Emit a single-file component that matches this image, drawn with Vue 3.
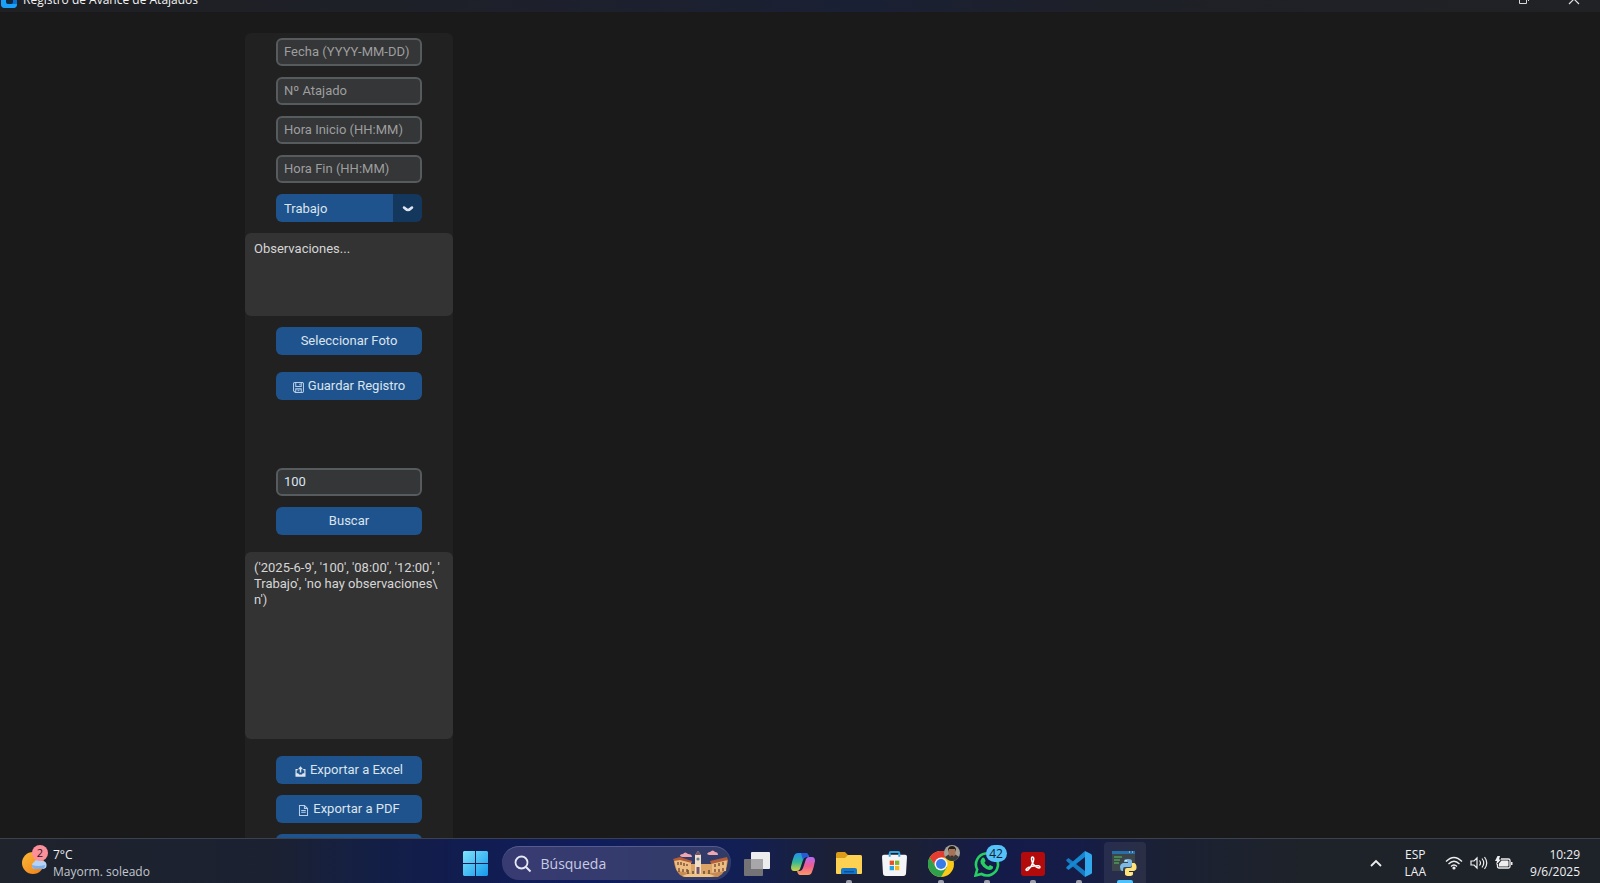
<script setup>
import { ref } from 'vue'

const fields = [
  { id: 'fecha', hint: 'Fecha (YYYY-MM-DD)' },
  { id: 'atajado', hint: 'Nº Atajado' },
  { id: 'inicio', hint: 'Hora Inicio (HH:MM)' },
  { id: 'fin', hint: 'Hora Fin (HH:MM)' }
]
const values = ref({ fecha: '', atajado: '', inicio: '', fin: '' })
const estado = ref('Trabajo')
const observaciones = ref('Observaciones...')
const busqueda = ref('100')
const resultado = ref("('2025-6-9', '100', '08:00', '12:00', '\nTrabajo', 'no hay observaciones\\\nn')")
</script>

<template>
  <div class="screen">
    <header class="titlebar">
      <svg class="app-icon" viewBox="0 0 16 16" width="16" height="16" aria-hidden="true">
        <rect width="16" height="16" rx="4" fill="#0a6fd0" />
        <path d="M0 0h6v16H4a4 4 0 0 1-4-4zM6 12h10a4 4 0 0 1-4 4H6z" fill="#18a0fb" />
        <rect x="5" y="4" width="7" height="8" rx="2" fill="#12263c" />
      </svg>
      <h1>Registro de Avance de Atajados</h1>
      <div class="window-buttons">
        <button type="button" aria-label="Restaurar">
          <svg viewBox="0 0 12 12" width="12" height="12"><path d="M1.500 3.500h7v7h-7zM4 1h6.500v7" fill="none" stroke="#d8d8d8" /></svg>
        </button>
        <button type="button" aria-label="Cerrar">
          <svg viewBox="0 0 12 12" width="12" height="12"><path d="M1 1l10 10M11 1L1 11" fill="none" stroke="#e0e0e0" stroke-width="1.200" /></svg>
        </button>
      </div>
    </header>

    <main class="workspace">
      <form class="panel" @submit.prevent>
        <input v-for="f in fields" :key="f.id" v-model="values[f.id]" class="control entry" type="text" :placeholder="f.hint" :aria-label="f.hint" />
        <div class="control option">
          <select v-model="estado" aria-label="Estado">
            <option>Trabajo</option>
            <option>Descanso</option>
          </select>
          <span class="arrow">
            <svg viewBox="0 0 12 8" width="12" height="8" aria-hidden="true"><path d="M2 2.500Q4.500 5 6 5T10 2.500" fill="none" stroke="#dce4ee" stroke-width="2.500" stroke-linecap="round" /></svg>
          </span>
        </div>
        <textarea v-model="observaciones" class="box notes" aria-label="Observaciones" spellcheck="false"></textarea>
        <button type="button" class="control action">Seleccionar Foto</button>
        <button type="submit" class="control action save">
          <svg viewBox="0 0 12 12" width="11" height="11" aria-hidden="true"><path d="M2 .6h8.500l.9.900V10a1.400 1.400 0 0 1-1.400 1.400H2.500L.6 9.600V2A1.400 1.400 0 0 1 2 .6zM3 .8v4h6v-4M3 11.200V7.500h6v3.700M5 9.500h2M7.500 2v1.500" fill="none" stroke="#b9cfe8" stroke-width="1.100" /></svg>
          <span>Guardar Registro</span>
        </button>
        <input v-model="busqueda" class="control entry search" type="text" aria-label="Buscar Nº Atajado" />
        <button type="button" class="control action">Buscar</button>
        <textarea v-model="resultado" class="box results" aria-label="Resultados" spellcheck="false"></textarea>
        <button type="button" class="control action export">
          <svg viewBox="0 0 12 12" width="11" height="11" aria-hidden="true"><path d="M3 4H1.200v7.200h9.600V4H9" fill="none" stroke="#dce4ee" stroke-width="1.300" /><path d="M1 8h2.500l1 1.300h3L8.500 8H11v3H1zM6 .3L8.700 3.500H6.800v3.500H5.200V3.500H3.300z" fill="#dce4ee" /></svg>
          <span>Exportar a Excel</span>
        </button>
        <button type="button" class="control action">
          <svg viewBox="0 0 12 12" width="11" height="11" aria-hidden="true"><path d="M1.600.6H7l3.400 3.300v7.500H1.600zM7 .6v3.300h3.400M3.500 6h5M3.500 8h5" fill="none" stroke="#b9cfe8" stroke-width="1.100" /></svg>
          <span>Exportar a PDF</span>
        </button>
        <button type="button" class="control action" aria-label="Exportar"></button>
      </form>
    </main>

    <footer class="taskbar">
      <button type="button" class="weather">
        <span class="weather-icon">
          <svg viewBox="0 0 28 30" width="28" height="30" aria-hidden="true">
            <defs><linearGradient id="sun" x1="0" y1="0" x2="1" y2="1"><stop stop-color="#fbb937" /><stop offset="1" stop-color="#ef7d1a" /></linearGradient></defs>
            <circle cx="11" cy="17" r="11" fill="url(#sun)" />
            <path d="M12 23a4 4 0 0 1 0-7 5 5 0 0 1 8-1 4 4 0 0 1 1 8z" fill="#b5d3f5" />
            <path d="M12 23a4 4 0 0 1-2-4q6 2 13 0a4 4 0 0 1-2 4z" fill="#7faee8" />
          </svg>
          <span class="alert">2</span>
        </span>
        <span class="weather-text"><span class="temp">7°C</span><span class="sky">Mayorm. soleado</span></span>
      </button>

      <nav class="apps" aria-label="Barra de tareas">
        <button type="button" class="app" aria-label="Inicio">
          <svg viewBox="0 0 26 26" width="25" height="25">
            <defs><linearGradient id="win" x1="0" y1="0" x2="1" y2="1"><stop stop-color="#7fe4fb" /><stop offset="1" stop-color="#1498ec" /></linearGradient></defs>
            <path d="M1 0h11.500v12.500H0V1zM13.500 0H25l1 1v11.500H13.500zM0 13.500h12.500V26H1l-1-1zM13.500 13.500H26V25l-1 1H13.500z" fill="url(#win)" />
          </svg>
        </button>
        <label class="finder">
          <svg viewBox="0 0 18 18" width="18" height="18" aria-hidden="true"><path d="M12 12l4.500 4.500" stroke="#e6e8f4" stroke-width="2" /><circle cx="7.500" cy="7.500" r="6" fill="none" stroke="#e6e8f4" stroke-width="1.800" /></svg>
          <input type="text" placeholder="Búsqueda" aria-label="Búsqueda" />
          <svg class="plaza" viewBox="0 0 56 28" width="56" height="28" aria-hidden="true">
            <path d="M1 10q0 9 6 15l4 2h34q9-5 10-17l-14 2v5H16v-4z" fill="#c98b55" />
            <path d="M1 10l6-1 11 3v11L4 21zM38 12l16-3-1 12-15 2z" fill="#ebbd80" />
            <path d="M0 9l7-2 12 4v2L7 10l-6 1zM37 11l17-4 1 3-17 4z" fill="#b45d38" />
            <path d="M18 14h21v9H18z" fill="#dca467" />
            <path d="M5 12v3M8 12v3M11 13v3M14 14v2M42 14v3M46 13v3M50 12v3M6 18v4M10 19v3M14 19v3M42 19v3M46 19v3M50 18v3" stroke="#744330" stroke-width="1.300" />
            <path d="M22 5l3-4 3 4v19h-6z" fill="#f0dfc4" />
            <path d="M22 5l3-4 3 4zM23.500 17h3v7h-3z" fill="#74526b" />
            <circle cx="25" cy="9" r="1.600" fill="#687c9f" />
            <path d="M9 26q8-4 16-2 9-2 17 2l-4 1H13z" fill="#f0c485" />
            <path d="M15 24v-4M20 24v-3M31 24v-3M36 24v-4" stroke="#6b5436" stroke-width="1.600" />
            <path d="M7 6q0-2 3-2 2-3 5 0 4 0 4 3H9zM34 4q1-2 3-2 3-3 5 0 3 0 3 3H36z" fill="#eda6b2" />
          </svg>
        </label>
        <button type="button" class="app" aria-label="Vista de tareas">
          <svg viewBox="0 0 26 24" width="26" height="24"><rect x="7" width="19" height="17" rx="1" fill="#ececef" /><rect y="7" width="19" height="17" rx="1" fill="#747477" /><path d="M7 7h12v10H7z" fill="#a7a7aa" /></svg>
        </button>
        <button type="button" class="app" aria-label="Copilot">
          <svg viewBox="0 0 24 22" width="24" height="22">
            <defs>
              <linearGradient id="cpa" x1="0" y1="0" x2="0" y2="1"><stop stop-color="#238fef" /><stop offset=".5" stop-color="#31b899" /><stop offset="1" stop-color="#d4d33f" /></linearGradient>
              <linearGradient id="cpb" x1="0" y1="0" x2="0" y2="1"><stop stop-color="#b46af5" /><stop offset=".5" stop-color="#ef5d8f" /><stop offset="1" stop-color="#fc9868" /></linearGradient>
            </defs>
            <path d="M7 0h8q2 0 3 4h-3q-2 0-3 3l-3 9q-1 2-3 2H3q-3 0-3-4Q1 8 3 3 4 0 7 0z" fill="url(#cpa)" />
            <path d="M17 22H9q-2 0-3-4h3q2 0 3-3l3-9q1-2 3-2h3q3 0 3 4-1 6-3 11-1 3-4 3z" fill="url(#cpb)" />
            <path d="M10 0h5q2 0 3 4h-3q-2 0-3 3z" fill="#235bd8" />
          </svg>
        </button>
        <button type="button" class="app open" aria-label="Explorador de archivos">
          <svg viewBox="0 0 26 24" width="26" height="24">
            <path d="M0 3V2q0-2 2-2h7l3 3h12q2 0 2 2v4H0z" fill="#dc9b18" />
            <path d="M0 6h9l3-3h12q2 0 2 2v16q0 1-1 1H1q-1 0-1-1z" fill="#fdd253" />
            <path d="M5 22v-4q0-2 2-2h12q2 0 2 2v4z" fill="#1678cc" /><path d="M8 19h10v1.500H8z" fill="#0c518e" />
          </svg>
        </button>
        <button type="button" class="app" aria-label="Microsoft Store">
          <svg viewBox="0 0 26 26" width="25" height="25">
            <path d="M8 6V2q0-1 1-1h8q1 0 1 1v4" fill="none" stroke="#31a5df" stroke-width="2" />
            <path d="M2 4h22q2 0 2 2l-1 17q0 3-3 3H4q-3 0-3-3L0 6q0-2 2-2z" fill="#f4f5f7" />
            <path d="M7 4h2v2H7zM17 4h2v2h-2z" fill="#31a5df" />
            <path d="M8 10h4.500v4.500H8z" fill="#e8502b" /><path d="M13.500 10H18v4.500h-4.500z" fill="#7eb72e" /><path d="M8 15.500h4.500V20H8z" fill="#22a3e4" /><path d="M13.500 15.500H18V20h-4.500z" fill="#f8b71c" />
          </svg>
        </button>
        <button type="button" class="app open" aria-label="Google Chrome">
          <svg viewBox="0 0 26 26" width="26" height="26">
            <circle cx="13" cy="13" r="13" fill="#fbc917" />
            <path d="M1.700 6.500A13 13 0 0 1 24.300 6.500H13L8 16z" fill="#e53c32" />
            <path d="M1.700 6.500A13 13 0 0 0 13 26l6-10-11 0z" fill="#2fa04b" />
            <circle cx="13" cy="13" r="6.500" fill="#f5f8fb" /><circle cx="13" cy="13" r="5" fill="#397be8" />
          </svg>
          <svg class="avatar" viewBox="0 0 16 16" width="16" height="16" aria-hidden="true">
            <circle cx="8" cy="8" r="8" fill="#a5a197" /><path d="M1 12q3-3 7-3t7 3q-3 4-7 4t-7-4z" fill="#343a3a" /><ellipse cx="8" cy="7.500" rx="3.500" ry="5" fill="#a77255" /><path d="M4 7V4q1-3 4-3t4 3v3l-1-3H5z" fill="#211b19" /><path d="M6 11q2-1 4 0l-2 2z" fill="#3a2924" />
          </svg>
        </button>
        <button type="button" class="app open" aria-label="WhatsApp">
          <svg viewBox="0 0 26 26" width="26" height="26">
            <path d="M1.500 24.500l1.700-6A11 11 0 1 1 7.500 23z" fill="none" stroke="#25cf62" stroke-width="2.600" />
            <path d="M8 7q1-1 2.300 0l1.300 3-1.200 1.700q1.300 2.500 4 3.700l1.600-1.300 3 1.500q.5 2-1.300 3-2 1-5-.4-4-2-5.900-5.600Q5.800 9.500 8 7z" fill="#25cf62" />
          </svg>
          <span class="badge">42</span>
        </button>
        <button type="button" class="app open" aria-label="Adobe Acrobat">
          <svg viewBox="0 0 24 24" width="24" height="24">
            <rect width="24" height="24" rx="3" fill="#b30b0b" />
            <path d="M11.500 5q2 0 .8 4.500Q10.500 15 7 18q-2 1-2-.5Q6 15 13 14q6-.8 6 1 0 2-3.500.2Q11 12 10.500 7.500 10.400 5 11.500 5z" fill="none" stroke="#fff" stroke-width="1.500" />
          </svg>
        </button>
        <button type="button" class="app open" aria-label="Visual Studio Code">
          <svg viewBox="0 0 26 26" width="26" height="26">
            <path d="M0 9l2.500-2L19 20v6L1 10.500z" fill="#167bc0" /><path d="M0 17l2.500 2L19 6V0L1 15.500z" fill="#1687d1" /><path d="M19 0l6 3q1 .5 1 1.500v17q0 1-1 1.500l-6 3z" fill="#31a8ee" />
          </svg>
        </button>
        <button type="button" class="app active" aria-label="Registro de Avance de Atajados">
          <svg viewBox="0 0 25 25" width="25" height="25">
            <path d="M0 0h23v20H0z" fill="#3c4549" /><path d="M0 0h23v3H0z" fill="#276fa6" /><path d="M17 1h1M20 1h1" stroke="#d8edf7" />
            <path d="M2 6h8M2 9h6M2 12h5" stroke="#4f9b58" stroke-width="1.300" />
            <path d="M12 10q0-2 4-2t4 2v4q0 2-2 2h-5q-2 0-2 2v2H10q-2-1-2-4t3-4h5v-1h-4z" fill="#7db9e4" />
            <path d="M20 12h2q2 0 2.500 3.500T22 20h-5v1h4v2q0 2-4 2t-4-2v-4q0-2 2-2h3q2 0 2-2z" fill="#ffe27a" />
            <circle cx="14" cy="9.800" r=".8" fill="#fff" /><circle cx="18.500" cy="23" r=".8" fill="#fff" />
          </svg>
        </button>
      </nav>

      <div class="tray">
        <button type="button" aria-label="Mostrar iconos ocultos"><svg viewBox="0 0 14 10" width="14" height="10"><path d="M2 8l5-5 5 5" fill="none" stroke="#eee" stroke-width="1.800" /></svg></button>
        <button type="button" class="language"><span>ESP</span><span>LAA</span></button>
        <button type="button" class="status" aria-label="Red, volumen y batería">
          <svg viewBox="0 0 18 14" width="18" height="14"><path d="M1 5.500q8-8 16 0M3.500 8q5.500-5.500 11 0M6 10.500q3-3 6 0" fill="none" stroke="#eee" stroke-width="1.300" /><circle cx="9" cy="12" r="1.600" fill="#eee" /></svg>
          <svg viewBox="0 0 18 14" width="18" height="14"><path d="M1 5h3l3-3v10L4 9H1zM9.500 4.500q2 2.500 0 5M12 2.500q3.500 4.500 0 9M14.500 1q4.500 6 0 12" fill="none" stroke="#eee" stroke-width="1.200" /></svg>
          <svg viewBox="0 0 18 14" width="18" height="14"><path d="M6 3h7.500Q15 3 15 4.500v6q0 1.500-1.500 1.500H4q-1.500 0-1.500-1.500V8" fill="none" stroke="#eee" stroke-width="1.300" /><path d="M6.500 4.500h6q1 0 1 1v4q0 1-1 1H4V7.500zM16 6h1.500v3H16zM2.500 0L0 5h2L1 9l5-5.500H4L5 0z" fill="#eee" /></svg>
        </button>
        <button type="button" class="clock"><span>10:29</span><span>9/6/2025</span></button>
      </div>
    </footer>
  </div>
</template>

<style>
html,
body {
  margin: 0;
  background: #1a1a1a;
}
</style>

<style scoped>
.screen {
  height: 100vh;
  display: flex;
  flex-direction: column;
  overflow: hidden;
  background: #1a1a1a;
  color: #dce4ee;
  font-family: Roboto, sans-serif;
  font-size: 13px;
}
.screen * {
  box-sizing: border-box;
}
button,
input,
select,
textarea {
  margin: 0;
  padding: 0;
  border: 0;
  outline: 0;
  background: none;
  color: inherit;
  font: inherit;
}
svg {
  display: block;
  flex: none;
}
.titlebar {
  flex: none;
  height: 12px;
  display: flex;
  align-items: flex-end;
  overflow: hidden;
  background: linear-gradient(90deg, #1f2023, #1e2029 28%, #1a2034 54%, #1e2027 70%, #202225);
}
.app-icon {
  margin: 0 6px 4px 1px;
}
.titlebar h1 {
  margin: 0 auto 3px 0;
  color: #f2f2f2;
  font: 12px/18px "Open Sans", sans-serif;
}
.window-buttons {
  display: flex;
  gap: 38px;
  padding: 0 20px 7px 0;
}
.workspace {
  flex: 1;
  min-height: 0;
  padding: 21px 0 0 245px;
  overflow: hidden;
}
.panel {
  width: 208px;
  display: flex;
  flex-direction: column;
  align-items: center;
  gap: 11px;
  padding: 5px 0;
  border-radius: 6px;
  background: #212121;
}
.control {
  flex: none;
  width: 146px;
  height: 28px;
  border-radius: 6px;
}
.entry {
  padding: 0 6px 2px;
  border: 2px solid #565b5e;
  background: #343638;
  color: #dce4ee;
}
.entry::placeholder {
  color: #9e9e9e;
  opacity: 1;
}
.option {
  display: flex;
  position: relative;
  overflow: hidden;
  background: linear-gradient(90deg, #1f538d 117px, #14375e 117px);
}
.option select {
  width: 100%;
  padding: 0 8px;
  appearance: none;
}
.arrow {
  position: absolute;
  right: 8px;
  top: 11px;
  pointer-events: none;
}
.box {
  flex: none;
  display: block;
  width: 100%;
  padding: 8px 9px;
  border-radius: 6px;
  background: #333333;
  color: #d6d6d6;
  line-height: 16px;
  resize: none;
  white-space: pre;
  overflow: hidden;
}
.notes {
  height: 83px;
}
.results {
  height: 187px;
  margin-top: 6px;
}
.action {
  display: flex;
  align-items: center;
  justify-content: center;
  gap: 4px;
  padding-bottom: 1px;
  background: #1f538d;
}
.action svg {
  margin-top: 4px;
}
.save,
.export {
  margin-top: 6px;
}
.search {
  margin-top: 57px;
}
.taskbar {
  flex: none;
  height: 45px;
  display: grid;
  grid-template-columns: 1fr auto 1fr;
  align-items: center;
  overflow: hidden;
  border-top: 1px solid #3c424d;
  background: linear-gradient(90deg, #1e232c, #1b2131 17%, #141f45 23%, #111c50 29%, #101d5c 37%, #121f55 46%, #1b2036 52%, #1b2036 57%, #151b48 62%, #151c48 67%, #1b2133 73%, #1e2329 82%);
  color: #f0f0f3;
  font: 12px/17px "Open Sans", sans-serif;
}
.weather {
  display: flex;
  gap: 3px;
  padding: 4px 0 0 22px;
  text-align: left;
}
.weather-icon {
  position: relative;
}
.alert {
  position: absolute;
  top: -1px;
  left: 10px;
  width: 16px;
  height: 16px;
  border-radius: 50%;
  background: #fc8f99;
  color: #231a1e;
  font-size: 11px;
  line-height: 16px;
  text-align: center;
}
.weather-text,
.language,
.clock {
  display: flex;
  flex-direction: column;
}
.sky {
  color: #c3c7ce;
}
.apps {
  display: flex;
  height: 44px;
}
.app {
  position: relative;
  width: 46px;
  display: grid;
  place-items: center;
  padding-top: 5px;
}
.finder {
  width: 229px;
  height: 34px;
  margin: 7px 3px 0;
  display: flex;
  align-items: center;
  gap: 9px;
  padding: 0 2px 0 12px;
  border-radius: 17px;
  border-top: 1px solid #555d8c;
  background: linear-gradient(90deg, #383b72, #313b68);
}
.finder input {
  flex: 1;
  min-width: 0;
  font-size: 14px;
}
.finder input::placeholder {
  color: #c8cbe3;
  opacity: 1;
}
.open::after,
.active::after {
  content: "";
  position: absolute;
  left: 20px;
  bottom: 0;
  width: 6px;
  height: 3px;
  border-radius: 2px 2px 0 0;
  background: #9b9dab;
}
.active::after {
  left: 15px;
  width: 16px;
  background: #4cc2ff;
}
.active::before {
  content: "";
  position: absolute;
  inset: 3px 2px 0;
  border-radius: 4px 4px 0 0;
  background: rgba(255, 255, 255, 0.07);
}
.active svg {
  position: relative;
}
.avatar {
  position: absolute;
  top: 6px;
  right: 4px;
}
.badge {
  position: absolute;
  top: 6px;
  left: 22px;
  width: 21px;
  height: 17px;
  border-radius: 9px;
  background: #55c3fa;
  color: #0d2232;
  font-size: 12px;
  line-height: 17px;
  text-align: center;
}
.tray {
  display: flex;
  justify-content: flex-end;
  align-items: center;
  padding: 4px 20px 0 0;
}
.language {
  margin: 0 19px 0 22px;
  text-align: center;
}
.status {
  display: flex;
  gap: 7px;
  margin-right: 17px;
}
.clock {
  text-align: right;
}
</style>
